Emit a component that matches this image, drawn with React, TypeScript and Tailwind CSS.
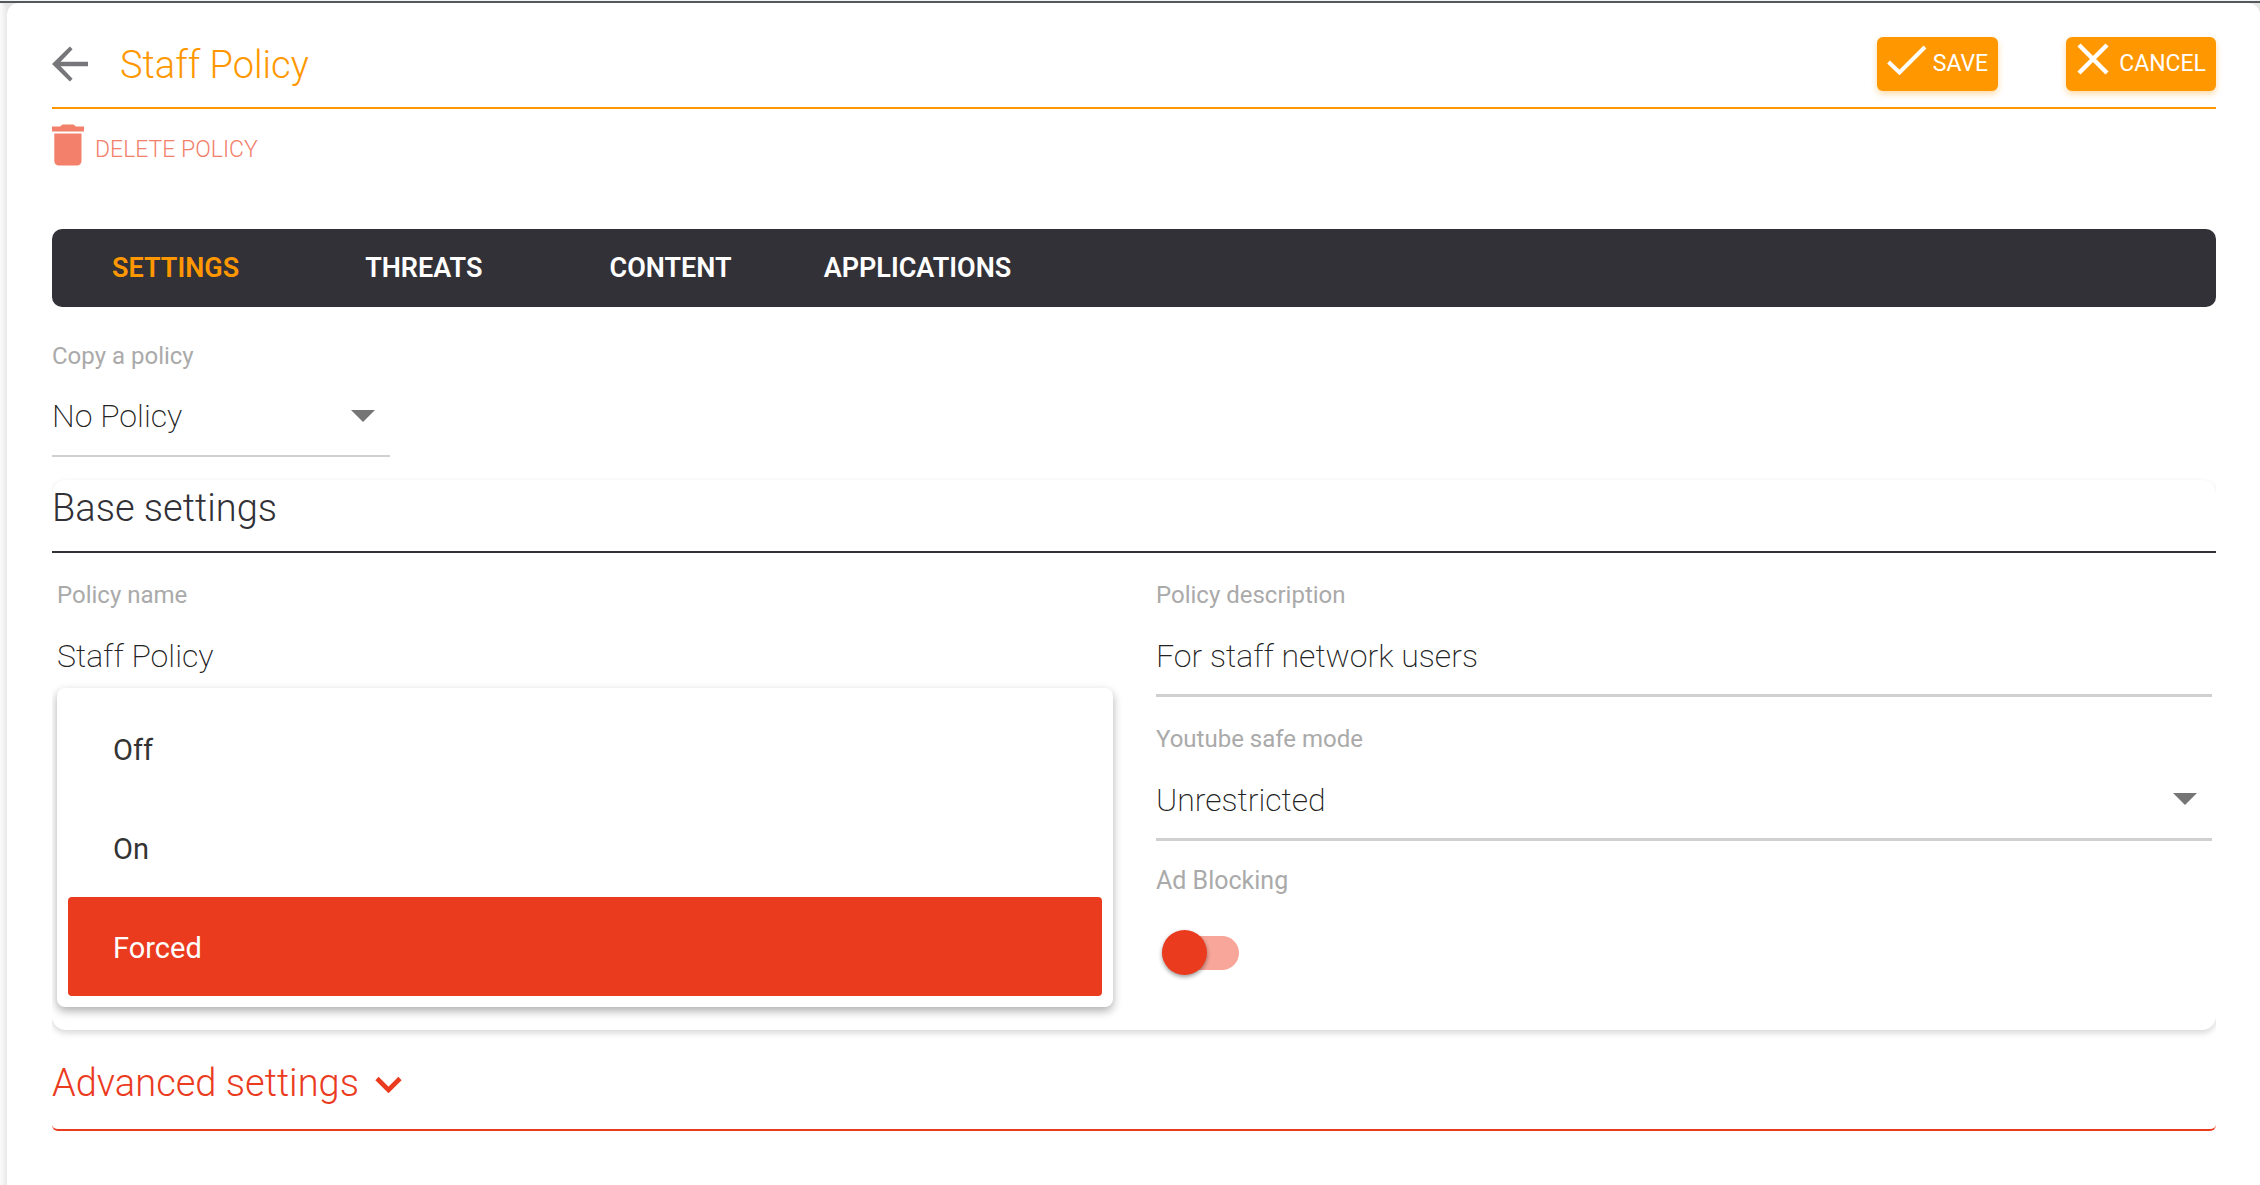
import { useState } from "react";

const tabs = [
  { label: "SETTINGS", pad: "pl-15 pr-16" },
  { label: "THREATS", pad: "pl-[62px] pr-16" },
  { label: "CONTENT", pad: "pl-[63px] pr-15" },
  { label: "APPLICATIONS", pad: "px-8" },
];

const modes = ["Off", "On", "Forced"];

function Caret({ className }: { className: string }) {
  return (
    <svg viewBox="0 0 24 12" className={`pointer-events-none absolute h-3 w-6 ${className}`} aria-hidden="true">
      <path d="M0 0h24L12 12z" fill="#757575" />
    </svg>
  );
}

function TextField({ id, label, value }: { id: string; label: string; value: string }) {
  return (
    <div className="pt-7">
      <label htmlFor={id} className="block text-2xl leading-7 text-[#aaaaaa]">
        {label}
      </label>
      <input
        id={id}
        defaultValue={value}
        className="mt-2 block h-20 w-full border-b-3 border-[#d0d0d0] bg-transparent text-[32px] font-extralight text-[#222222] outline-none"
      />
    </div>
  );
}

export default function App() {
  const [tab, setTab] = useState("SETTINGS");
  const [mode, setMode] = useState("Forced");

  return (
    <div className="flex min-h-screen flex-col bg-[#e6e6e6] font-[Roboto,sans-serif]">
      <div className="h-[3px] shrink-0 border-t border-[#f4f4f4] bg-[#54585c]" />
      <div className="flex grow">
        <aside className="w-[7px] shrink-0 rounded-tr-xl bg-linear-to-r from-[#fbfbfb] to-[#e9e9e9]" />
        <main className="min-w-0 grow rounded-t-xl bg-white pr-11 pl-[45px]">
          <header className="flex h-[106px] items-start justify-between border-b-2 border-[#ff9800] pt-[34px]">
            <div className="flex items-center">
              <button aria-label="Back" className="pb-[2px]">
                <svg viewBox="0 0 36 36" className="h-9 w-9" aria-hidden="true">
                  <path d="M36 15.8H8.6L20.6 3.2 17.8 0.4 0 18l17.8 17.6 2.8-2.8L8.6 20.2H36z" fill="#77777b" />
                </svg>
              </button>
              <h1 className="ml-8 text-[38px] leading-14 font-light text-[#ff9800]">Staff Policy</h1>
            </div>
            <div className="flex gap-17">
              <button className="flex h-[54px] items-center rounded-md bg-[#ff9800] px-[10px] text-[23px] text-white shadow-[0_3px_6px_rgba(255,152,0,0.35)]">
                <svg viewBox="0 0 40 30" className="-mt-2 mr-[6px] h-[30px] w-10" aria-hidden="true">
                  <path d="M1.5 17 12.5 27.5 38 2" fill="none" stroke="white" strokeWidth="4" />
                </svg>
                SAVE
              </button>
              <button className="flex h-[54px] items-center rounded-md bg-[#ff9800] pr-[10px] pl-[11px] text-[23px] text-white shadow-[0_3px_6px_rgba(255,152,0,0.35)]">
                <svg viewBox="0 0 32 32" className="-mt-[10px] mr-[10px] h-8 w-8" aria-hidden="true">
                  <path d="M2 2l28 28M30 2L2 30" fill="none" stroke="white" strokeWidth="4.4" />
                </svg>
                CANCEL
              </button>
            </div>
          </header>

          <button className="mt-[15px] flex h-[42px] items-center text-[23px] leading-8 font-light text-[#f2806a]">
            <svg viewBox="0 0 32 42" className="mr-[11px] h-[42px] w-8" aria-hidden="true">
              <path d="M0 2.5h8L10.500 0.500h11l2.500 2h8v5H0zM2.300 9.500h27.200V37a4.500 4.500 0 0 1-4.500 4.500H6.800A4.500 4.500 0 0 1 2.300 37z" fill="#f2806a" />
            </svg>
            <span className="mt-[10px]">DELETE POLICY</span>
          </button>

          <nav className="mt-[63px] flex h-[78px] items-stretch rounded-[10px] bg-[#323137]">
            {tabs.map((t) => (
              <button
                key={t.label}
                onClick={() => setTab(t.label)}
                className={`${t.pad} text-[27px] font-semibold ${tab === t.label ? "text-[#ff9800]" : "text-white"}`}
              >
                {t.label}
              </button>
            ))}
          </nav>

          <div className="w-[338px] pt-[35px]">
            <label htmlFor="copy" className="block text-2xl leading-7 text-[#aaaaaa]">
              Copy a policy
            </label>
            <div className="relative mt-2">
              <select
                id="copy"
                className="block h-[79px] w-full appearance-none border-b-2 border-[#d0d0d0] bg-transparent pb-[2px] text-[32px] font-extralight text-[#222222] outline-none"
              >
                <option>No Policy</option>
              </select>
              <Caret className="top-8 right-[15px]" />
            </div>
          </div>

          <div className="mt-[23px] overflow-x-clip">
            <section className="h-[550px] rounded-[14px] bg-white shadow-[0_3px_6px_rgba(0,0,0,0.16)]">
              <h2 className="h-[73px] border-b-2 border-[#323137] pt-2 text-[38px] leading-10 font-light text-[#323137]">
                Base settings
              </h2>
              <div className="grid grid-cols-2 gap-x-[43px] pr-1 pl-[5px]">
                <div>
                  <TextField id="name" label="Policy name" value="Staff Policy" />
                  <div className="relative">
                    <div
                      role="listbox"
                      aria-label="Safe search"
                      className="absolute inset-x-0 -top-[9px] flex flex-col rounded-lg bg-white p-[11px] shadow-[0_4px_10px_rgba(0,0,0,0.32)]"
                    >
                      {modes.map((m) => (
                        <button
                          key={m}
                          role="option"
                          aria-selected={m === mode}
                          onClick={() => setMode(m)}
                          className={`h-[99px] rounded px-[45px] pt-1 text-left text-[29px] ${
                            m === mode ? "bg-[#eb3b1e] text-white" : "text-[#333333]"
                          }`}
                        >
                          {m}
                        </button>
                      ))}
                    </div>
                  </div>
                </div>
                <div>
                  <TextField id="description" label="Policy description" value="For staff network users" />
                  <div className="pt-7">
                    <label htmlFor="youtube" className="block text-2xl leading-7 text-[#aaaaaa]">
                      Youtube safe mode
                    </label>
                    <div className="relative mt-2">
                      <select
                        id="youtube"
                        className="block h-20 w-full appearance-none border-b-3 border-[#d0d0d0] bg-transparent text-[32px] font-extralight text-[#222222] outline-none"
                      >
                        <option>Unrestricted</option>
                      </select>
                      <Caret className="top-8 right-[15px]" />
                    </div>
                  </div>
                  <label className="block pt-6 text-[25px] leading-8 text-[#aaaaaa]">
                    Ad Blocking
                    <span className="relative mt-[33px] ml-[6px] block h-[45px] w-[77px]">
                      <input type="checkbox" role="switch" className="peer absolute inset-0 z-10 opacity-0" />
                      <span className="absolute inset-x-0 top-[6px] h-[34px] rounded-full bg-[#f7a699]" />
                      <span className="absolute top-0 left-0 h-[45px] w-[45px] rounded-full bg-[#eb3b1e] shadow-[0_2px_4px_rgba(0,0,0,0.4)] peer-checked:left-8" />
                    </span>
                  </label>
                </div>
              </div>
            </section>
            <div className="h-6" />
          </div>

          <button className="flex h-[77px] w-full items-start rounded-md border-b-2 border-[#eb3b1e] pt-[3px] text-left text-[38px] leading-13 font-light text-[#eb3b1e]">
            Advanced settings
            <svg viewBox="0 0 27 17" className="mt-[19px] ml-4 h-[17px] w-[27px]" aria-hidden="true">
              <path d="M2 2.500l11.500 11.500L25 2.500" fill="none" stroke="#eb3b1e" strokeWidth="4.600" />
            </svg>
          </button>
        </main>
      </div>
    </div>
  );
}
